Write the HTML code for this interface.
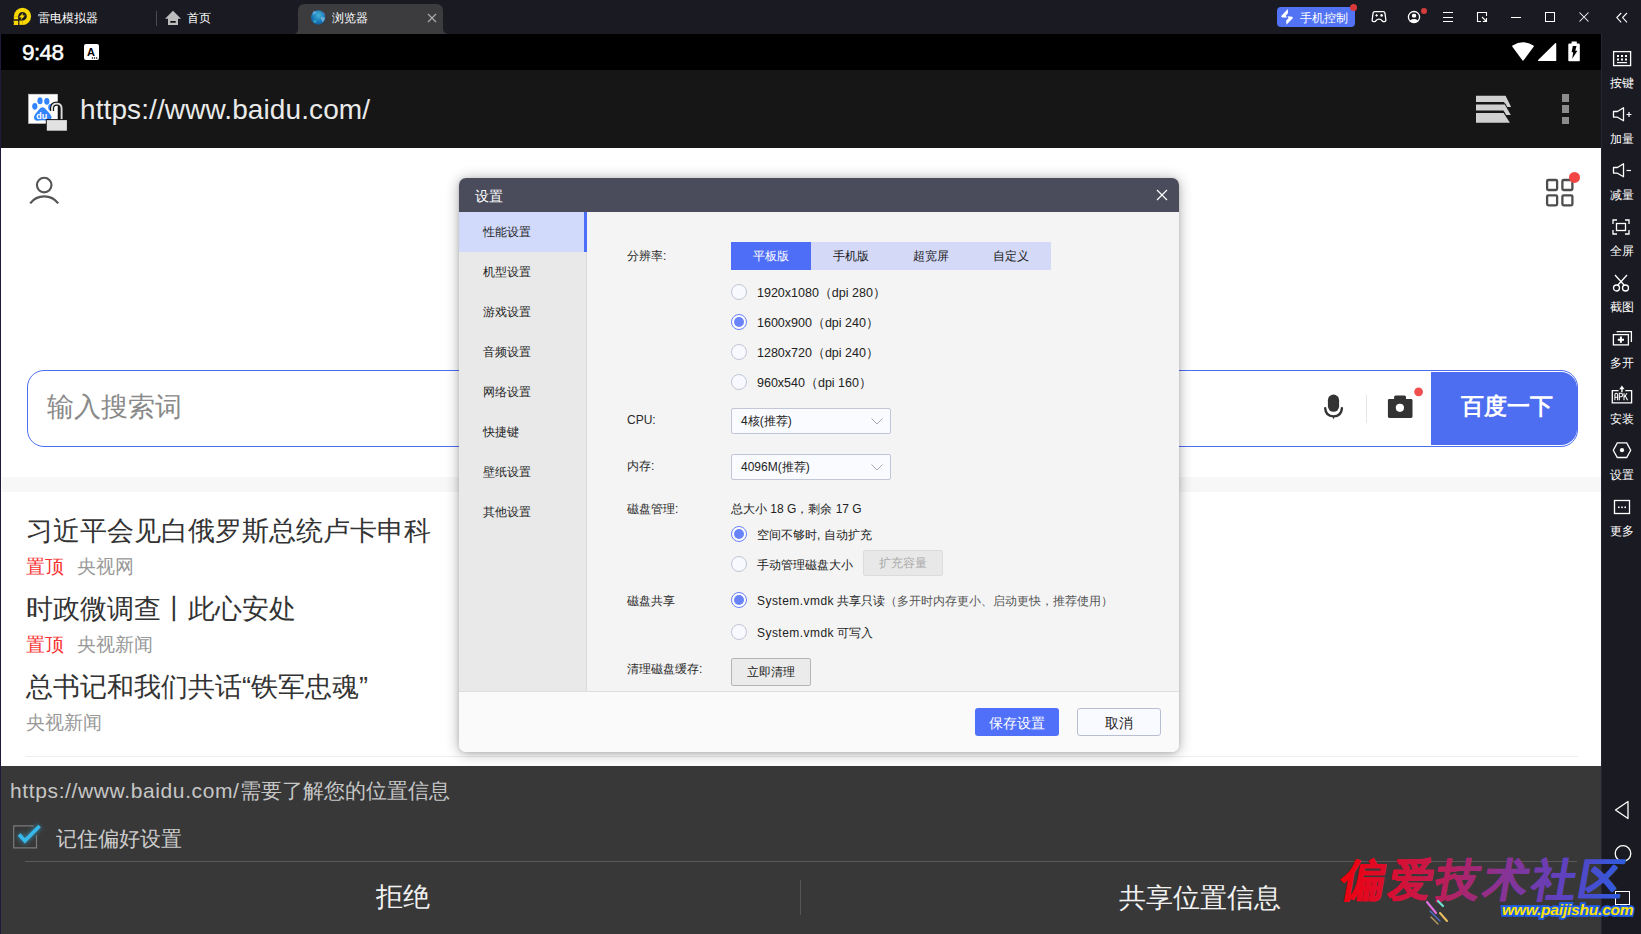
<!DOCTYPE html>
<html><head><meta charset="utf-8">
<style>
*{box-sizing:border-box;margin:0;padding:0}
html,body{width:1641px;height:934px;overflow:hidden}
body{position:relative;background:#1a1a22;font-family:"Liberation Sans",sans-serif;color:#fff}
.a{position:absolute}
.t{position:absolute;white-space:nowrap;line-height:1}
/* top bar */
#top{left:0;top:0;width:1641px;height:34px;background:#1a1a22}
/* android */
#status{left:1px;top:34px;width:1600px;height:36px;background:#000}
#addr{left:1px;top:70px;width:1600px;height:78px;background:#161616}
#page{left:1px;top:148px;width:1600px;height:618px;background:#fff;overflow:hidden}
#sheet{left:1px;top:766px;width:1600px;height:168px;background:#383838}
#side{left:1601px;top:34px;width:40px;height:900px;background:#1a1a22;border-left:1px solid #25243a}
.side-item{position:absolute;left:0;width:40px;text-align:center}
.side-lbl{position:absolute;left:0;width:40px;text-align:center;font-size:12px;color:#fff;line-height:12px}
/* dialog */
#dlg{left:459px;top:178px;width:720px;height:574px;background:#f4f4f4;border-radius:7px;box-shadow:0 1px 14px rgba(0,0,0,.32),0 1px 4px rgba(0,0,0,.12);overflow:hidden}
#dlg .title{left:0;top:0;width:720px;height:34px;background:#4a4c5b}
#nav{left:0;top:34px;width:128px;height:479px;background:#e9e9e9;border-right:1px solid #dadada}
.nav-it{position:absolute;left:0;width:127px;height:40px;font-size:12px;color:#1e1e1e;line-height:41px;padding-left:24px}
#foot{left:0;top:513px;width:720px;height:61px;background:#fafafa;border-top:1px solid #dedede}
.lbl{position:absolute;font-size:12px;color:#2a2a2a;line-height:14px;white-space:nowrap}
.radio{position:absolute;width:16px;height:16px;border-radius:50%;border:1.2px solid #c2c5d5;background:#f8f9ff}
.radio.on{border:1.2px solid #6580fb;background:#fff}
.radio.on::after{content:"";position:absolute;left:1.8px;top:1.8px;width:10px;height:10px;border-radius:50%;background:#6984fb}
.rtxt{position:absolute;font-size:12.5px;color:#222;line-height:14px;white-space:nowrap}
</style></head><body>

<div id="top" class="a">
  <!-- logo -->
  <svg class="a" style="left:8px;top:4px" width="28" height="26" viewBox="8 4 28 26">
    <path d="M16.05 16.3 A6.45 6.45 0 1 1 22.5 22.75" fill="none" stroke="#f8d800" stroke-width="4.3"/>
    <rect x="13.85" y="16.2" width="4.3" height="3.1" fill="#f8d800"/>
    <rect x="19.4" y="20.6" width="3.3" height="4.3" fill="#f8d800"/>
    <path d="M13.5 20.8 H18.2 V25 H13.3 L14 24 Z" fill="#f8d800"/>
    <path d="M23.4 12.4 L19 17.3 L21.6 17.5 L20.4 20.6 L25 15.5 L22.4 15.3 Z" fill="#f8d800"/>
  </svg>
  <div class="t" style="left:38px;top:12px;font-size:12px;color:#fff">雷电模拟器</div>
  <div class="a" style="left:156px;top:11px;width:1px;height:15px;background:#4a4a55"></div>
  <svg class="a" style="left:160px;top:6px" width="30" height="24" viewBox="160 6 30 24">
    <path d="M173 10.8 L181 18.8 H178 V25 H168 V18.8 H165 Z" fill="#bdbdbd"/>
    <rect x="170.2" y="21" width="5.6" height="1.8" rx="0.6" fill="#111"/>
  </svg>
  <div class="t" style="left:187px;top:12px;font-size:12px;color:#fff">首页</div>
  <!-- active tab -->
  <svg class="a" style="left:293px;top:4px" width="158" height="30" viewBox="0 0 158 30">
    <path d="M0.5 30 Q5 30 5 24 V7 Q5 0 12 0 H143 Q150 0 150 7 V24 Q150 30 156 30 Z" fill="#3c3c3f"/>
  </svg>
  <svg class="a" style="left:306px;top:6px" width="24" height="22" viewBox="306 6 24 22">
    <defs><radialGradient id="gl" cx="0.55" cy="0.35" r="0.7"><stop offset="0" stop-color="#45b4d6"/><stop offset="0.6" stop-color="#1a7ab8"/><stop offset="1" stop-color="#0f5a98"/></radialGradient></defs>
    <circle cx="318.1" cy="17.5" r="7.2" fill="url(#gl)"/>
    <path d="M313 11.5 Q315.5 10.8 317 12.5 Q315 14 312.5 15 Z" fill="#6bb0e0" opacity="0.8"/>
    <path d="M320.5 17.5 Q323.5 16.5 325 18 Q324.5 21 322.5 22 Q321.5 20 320.5 17.5Z" fill="#7ab8e0" opacity="0.8"/>
    <path d="M313.5 19.5 Q316 19.8 316.8 21.5 Q315.5 23.5 314.5 23 Q313.2 21.5 313.5 19.5Z" fill="#3ab0c8" opacity="0.8"/>
    <path d="M322.5 11.5 Q325 13 325.3 15.5 Q324 14 322.5 11.5Z" fill="#8a80f0" opacity="0.8"/>
  </svg>
  <div class="t" style="left:332px;top:12px;font-size:12px;color:#fff">浏览器</div>
  <svg class="a" style="left:427px;top:13px" width="10" height="10" viewBox="0 0 10 10"><path d="M1 1L9 9M9 1L1 9" stroke="#aaa" stroke-width="1.2"/></svg>

  <!-- right controls -->
  <div class="a" style="left:1277px;top:7px;width:78px;height:20px;border-radius:4px;background:#5274f4"></div>
  <svg class="a" style="left:1276px;top:4px" width="24" height="26" viewBox="1276 4 24 26"><path d="M1287.8 9 L1288 13.3 L1285.7 15.7 L1287.2 17.6 L1282.2 17.6 L1281 16.3 Z M1287.5 16.3 L1292.2 16.8 L1293 17.9 L1286.4 24.8 L1286.2 20.6 L1288.6 18.3 Z" fill="#fff"/></svg>
  <div class="t" style="left:1300px;top:12px;font-size:12px;color:#fff">手机控制</div>
  <div class="a" style="left:1350px;top:4px;width:7px;height:7px;border-radius:50%;background:#d9393b"></div>
  <svg class="a" style="left:1370px;top:9px" width="18" height="15" viewBox="1370 9 18 15"><path d="M1374.6 11.6 H1383.4 Q1384.6 11.6 1384.9 12.8 L1385.8 19.5 Q1386 21.6 1384.4 21.6 H1383.4 Q1382.6 21.6 1382 20.6 Q1381 19.2 1379 19.2 Q1377 19.2 1376 20.6 Q1375.4 21.6 1374.6 21.6 H1373.6 Q1372 21.6 1372.2 19.5 L1373.1 12.8 Q1373.4 11.6 1374.6 11.6 Z" fill="none" stroke="#fff" stroke-width="1.3" stroke-linejoin="round"/><path d="M1375.3 15.4 H1377.9 M1376.6 14.1 V16.7" stroke="#fff" stroke-width="1"/><circle cx="1381.6" cy="15.4" r="1.3" fill="#fff"/></svg>
  <svg class="a" style="left:1406px;top:9px" width="16" height="16" viewBox="1406 9 16 16"><defs><clipPath id="uc"><circle cx="1414" cy="17.1" r="5.5"/></clipPath></defs><circle cx="1414" cy="17.1" r="5.6" fill="none" stroke="#fff" stroke-width="1.3"/><rect x="1411.9" y="13.7" width="4.3" height="3.9" rx="1.6" fill="#fff"/><g clip-path="url(#uc)"><ellipse cx="1414" cy="22.6" rx="4.4" ry="3.6" fill="#fff"/></g></svg>
  <div class="a" style="left:1421px;top:8px;width:6px;height:6px;border-radius:50%;background:#d63c3c"></div>
  <div class="a" style="left:1443px;top:12px;width:10px;height:1.3px;background:#fff"></div>
  <div class="a" style="left:1443px;top:16.5px;width:10px;height:1.3px;background:#fff"></div>
  <div class="a" style="left:1443px;top:21px;width:10px;height:1.3px;background:#fff"></div>
  <svg class="a" style="left:1470px;top:6px" width="30" height="22" viewBox="1470 6 30 22"><path d="M1486.5 16 V12.5 H1477.5 V21.5 H1481" fill="none" stroke="#fff" stroke-width="1.1"/><path d="M1482.8 21.5 H1486.5 V18" fill="none" stroke="#fff" stroke-width="1.1"/><path d="M1482 17 L1485.6 20.6" stroke="#fff" stroke-width="1.1"/><path d="M1487 18.3 V22 H1483.3 Z" fill="#fff"/></svg>
  <div class="a" style="left:1511px;top:17px;width:10px;height:1.3px;background:#fff"></div>
  <div class="a" style="left:1545px;top:12px;width:10px;height:10px;border:1.3px solid #fff"></div>
  <svg class="a" style="left:1579px;top:12px" width="10" height="10" viewBox="0 0 10 10"><path d="M0.5 0.5L9.5 9.5M9.5 0.5L0.5 9.5" stroke="#fff" stroke-width="1.05"/></svg>
  <svg class="a" style="left:1615px;top:12px" width="13" height="11" viewBox="0 0 13 11"><path d="M6.2 1 L1.8 5.6 L6.2 10.3 M12 1 L7.6 5.6 L12 10.3" fill="none" stroke="#fff" stroke-width="1.1"/></svg>
</div>

<div class="a" style="left:0;top:34px;width:1px;height:900px;background:#1d1b3a"></div>
<!-- status bar -->
<div id="status" class="a">
  <div class="t" style="left:21px;top:8px;font-size:22.5px;color:#fff;-webkit-text-stroke:0.5px #fff;letter-spacing:-0.6px">9:48</div>
  <div class="a" style="left:83px;top:10px;width:15px;height:16px;background:#fff;border-radius:2px"></div>
  <div class="t" style="left:86px;top:13px;font-size:11px;font-weight:bold;color:#000">A</div><svg class="a" style="left:90px;top:23px" width="8" height="2" viewBox="0 0 8 2"><circle cx="1.4" cy="1" r="0.75" fill="#000"/><circle cx="3.5" cy="1" r="0.75" fill="#000"/><circle cx="5.6" cy="1" r="0.75" fill="#000"/></svg>
  <svg class="a" style="left:1510px;top:7px" width="72" height="22" viewBox="0 0 72 22">
    <path d="M2 5.2 Q12 -1.2 22 5.2 L12 18.8 Z" fill="#fff" stroke="#fff" stroke-width="1.6" stroke-linejoin="round"/>
    <path d="M27.6 19.4 L44.6 2.6 V19.4 Z" fill="#fff" stroke="#fff" stroke-width="1.3" stroke-linejoin="round"/>
    <path d="M57.3 3.6 Q57.3 2.4 58.5 2.4 H60.6 V0.4 H65.8 V2.4 H67.6 Q68.8 2.4 68.8 3.6 V19.4 Q68.8 20.2 68 20.2 H58.1 Q57.3 20.2 57.3 19.4 Z" fill="#fff"/>
    <path d="M61.8 5 H65.5 L64.3 9.8 H66.4 L61.2 17.8 L62.2 11.3 H60.6 Z" fill="#000"/>
  </svg>
</div>

<!-- address bar -->
<div id="addr" class="a">
  <svg class="a" style="left:23px;top:20px" width="50" height="44" viewBox="24 90 50 44">
    <rect x="28.6" y="94.2" width="29" height="29.2" fill="#fff" stroke="#cfcfcf" stroke-width="0.6"/>
    <ellipse cx="34.8" cy="106.3" rx="2.6" ry="3.4" fill="#3385ff"/>
    <ellipse cx="40" cy="100.7" rx="2.6" ry="3.5" fill="#3385ff"/>
    <ellipse cx="46.8" cy="101.3" rx="2.6" ry="3.4" fill="#3385ff"/>
    <ellipse cx="50.6" cy="107.3" rx="2.4" ry="3.2" fill="#3385ff"/>
    <path d="M42.7 107.2 Q40.5 107 38.5 110 L35 114.5 Q33 117 34.5 119.5 Q36 121.2 39 120.6 Q42.7 120 46 120.6 Q49.5 121.2 51 119 Q52.3 116.5 50 114 L46.5 110 Q44.7 107.2 42.7 107.2 Z" fill="#3385ff"/>
    <text x="36.3" y="118.6" font-size="9" font-weight="bold" fill="#fff" font-family="Liberation Sans">du</text>
    <path d="M52 111 V108.5 Q52 103.6 56.8 103.6 Q61.6 103.6 61.6 108.5 V121" fill="none" stroke="#161616" stroke-width="4.2"/>
    <path d="M52 111 V108.5 Q52 103.6 56.8 103.6 Q61.6 103.6 61.6 108.5 V121" fill="none" stroke="#dcdcdc" stroke-width="1.9"/>
    <rect x="45.8" y="119.1" width="22.2" height="12.6" fill="#161616"/>
    <rect x="46.8" y="120.1" width="20.1" height="10.6" fill="#e2e2e2"/>
  </svg>
  <div class="t" style="left:79px;top:26px;font-size:28px;color:#eaeaea;letter-spacing:0.1px">https://www.baidu.com/</div>
  <svg class="a" style="left:1469px;top:20px" width="46" height="38" viewBox="1470 90 46 38">
    <path d="M1476 95.8 H1505.6 L1511.1 107 H1506.5 L1504 102 H1476 Z" fill="#d0d0d0"/>
    <path d="M1476 103.6 H1505.4 L1511.9 115.9 H1505.4 L1502.9 111.5 H1476 Z" fill="#161616"/>
    <path d="M1476 104.6 H1504.8 L1510.8 114.9 H1506 L1503.5 110.5 H1476 Z" fill="#d0d0d0"/>
    <path d="M1476 111.9 H1504.2 L1510.8 123.8 H1476 Z" fill="#161616"/>
    <path d="M1476 112.9 H1503.6 L1509.9 122.8 H1476 Z" fill="#d0d0d0"/>
  </svg>
  <div class="a" style="left:1560.5px;top:24px;width:7.5px;height:7.5px;background:#8c8c8c"></div>
  <div class="a" style="left:1560.5px;top:35.2px;width:7.5px;height:7.5px;background:#8c8c8c"></div>
  <div class="a" style="left:1560.5px;top:46.5px;width:7.5px;height:7.5px;background:#8c8c8c"></div>
</div>

<!-- page -->
<div id="page" class="a">
  <svg class="a" style="left:25px;top:23px" width="40" height="40" viewBox="26 171 40 40">
    <circle cx="44.2" cy="185.1" r="7.3" fill="none" stroke="#555" stroke-width="2.1"/>
    <path d="M30.2 203.4 A17.5 17.5 0 0 1 58.2 203.4" fill="none" stroke="#555" stroke-width="2.2"/>
  </svg>
  <svg class="a" style="left:1541px;top:20px" width="44" height="44" viewBox="1542 168 44 44">
    <rect x="1547.1" y="180" width="10" height="10" rx="1.2" fill="none" stroke="#4d4d4d" stroke-width="2.3"/>
    <rect x="1562.4" y="180" width="10" height="10" rx="1.2" fill="none" stroke="#4d4d4d" stroke-width="2.3"/>
    <rect x="1547.1" y="195.3" width="10" height="10" rx="1.2" fill="none" stroke="#4d4d4d" stroke-width="2.3"/>
    <rect x="1562.4" y="195.3" width="10" height="10" rx="1.2" fill="none" stroke="#4d4d4d" stroke-width="2.3"/>
    <circle cx="1574.5" cy="177.4" r="5.5" fill="#f24545"/>
  </svg>
  <div class="a" style="left:26px;top:222px;width:1551px;height:77px;border:1px solid #4e6ef2;border-radius:17px;background:#fff"></div>
  <div class="a" style="left:1430px;top:224px;width:146px;height:73px;background:#4e6ef2;border-radius:0 16px 16px 0"></div>
  <div class="t" style="left:46px;top:246px;font-size:27px;color:#8a8a8a">输入搜索词</div>
  <svg class="a" style="left:1319px;top:242px" width="30" height="32" viewBox="1320 390 30 32">
    <rect x="1327.9" y="394.6" width="11.2" height="17.2" rx="5.6" fill="#333"/>
    <path d="M1325.2 408.3 Q1325.6 416.2 1333.5 416.4 Q1341.4 416.2 1341.9 408.3" fill="none" stroke="#333" stroke-width="2.4" stroke-linecap="round"/>
    <path d="M1332.2 416 H1334.8 L1333.5 419.6 Z" fill="#333"/>
  </svg>
  <div class="a" style="left:1365px;top:247px;width:1px;height:28px;background:#e6e6e6"></div>
  <svg class="a" style="left:1384px;top:238px" width="42" height="34" viewBox="1385 386 42 34">
    <path d="M1389.3 399 H1394.1 V397 Q1394.1 395.5 1395.6 395.5 H1404.5 Q1406 395.5 1406 397 V399 H1411.1 Q1412.5 399 1412.5 400.4 V416.5 Q1412.5 417.9 1411.1 417.9 H1389.3 Q1387.9 417.9 1387.9 416.5 V400.4 Q1387.9 399 1389.3 399 Z" fill="#333"/>
    <circle cx="1399.9" cy="407.8" r="4.1" fill="#fff"/>
    <circle cx="1418.6" cy="391.8" r="4.4" fill="#f24f4f"/>
  </svg>
  <div class="t" style="left:1460px;top:247px;font-size:23px;font-weight:bold;color:#fff">百度一下</div>
  <div class="a" style="left:1px;top:329px;width:1599px;height:15px;background:#f7f7f7"></div>
  <div class="t" style="left:25px;top:370px;font-size:27px;color:#333">习近平会见白俄罗斯总统卢卡申科</div>
  <div class="t" style="left:25px;top:409px;font-size:19px;color:#f73131">置顶</div>
  <div class="t" style="left:76px;top:409px;font-size:19px;color:#999">央视网</div>
  <div class="t" style="left:25px;top:448px;font-size:27px;color:#333">时政微调查丨此心安处</div>
  <div class="t" style="left:25px;top:487px;font-size:19px;color:#f73131">置顶</div>
  <div class="t" style="left:76px;top:487px;font-size:19px;color:#999">央视新闻</div>
  <div class="t" style="left:25px;top:526px;font-size:27px;color:#333">总书记和我们共话“铁军忠魂”</div>
  <div class="t" style="left:25px;top:565px;font-size:19px;color:#999">央视新闻</div>
  <div class="a" style="left:25px;top:608px;width:1552px;height:1px;background:#eee"></div>
</div>

<!-- bottom sheet -->
<div id="sheet" class="a">
  <div class="t" style="left:9px;top:14px;font-size:21px;color:#c6c6c6"><span style="letter-spacing:0.62px">https://www.baidu.com/</span>需要了解您的位置信息</div>
  <svg class="a" style="left:6px;top:50px" width="40" height="40" viewBox="0 0 40 40">
    <defs><filter id="glow" x="-50%" y="-50%" width="200%" height="200%"><feGaussianBlur stdDeviation="2.2"/></filter></defs>
    <path d="M26.6 9.9 H6.7 V31.9 H29.5 V19.2" fill="none" stroke="#7a7a7a" stroke-width="1.2"/>
    <path d="M12 18.4 L17.9 24.8 L32.6 10" fill="none" stroke="#33b5e5" stroke-width="6" opacity="0.45" filter="url(#glow)"/>
    <path d="M12 18.4 L17.9 24.8 L32.6 10" fill="none" stroke="#38b8ea" stroke-width="3.7" stroke-linejoin="miter"/>
  </svg>
  <div class="t" style="left:55px;top:62px;font-size:21px;color:#cbcbcb">记住偏好设置</div>
  <div class="a" style="left:24px;top:95px;width:1552px;height:1px;background:#5a5a5a"></div>
  <div class="a" style="left:799px;top:114px;width:1px;height:35px;background:#555"></div>
  <div class="t" style="left:375px;top:118px;font-size:27px;color:#f2f2f2">拒绝</div>
  <div class="t" style="left:1118px;top:119px;font-size:26.6px;color:#f2f2f2">共享位置信息</div>
</div>

<!-- sidebar -->
<div id="side" class="a">
  <svg class="a" style="left:10px;top:16px" width="20" height="17" viewBox="0 0 20 17"><rect x="1.6" y="1.6" width="17" height="14" stroke="#fff" stroke-width="1.3" fill="none"/><rect x="5" y="5" width="2" height="2" fill="#fff"/><rect x="9" y="5" width="2" height="2" fill="#fff"/><rect x="13" y="5" width="2" height="2" fill="#fff"/><rect x="5" y="8.5" width="2" height="2" fill="#fff"/><rect x="9" y="8.5" width="2" height="2" fill="#fff"/><rect x="13" y="8.5" width="2" height="2" fill="#fff"/><rect x="5" y="12" width="10" height="1.2" fill="#fff"/></svg>
  <div class="side-lbl" style="top:43px">按键</div>
  <svg class="a" style="left:10px;top:73px" width="21" height="15" viewBox="0 0 21 15"><path d="M1.5 4.5 H5.5 L11.5 0.8 V13.8 L5.5 10.2 H1.5 Z" stroke="#fff" stroke-width="1.3" fill="none" stroke-linejoin="round"/><path d="M14.5 7.5 H19.5 M17 5 V10" stroke="#fff" stroke-width="1.2"/></svg>
  <div class="side-lbl" style="top:99px">加量</div>
  <svg class="a" style="left:10px;top:129px" width="21" height="15" viewBox="0 0 21 15"><path d="M1.5 4.5 H5.5 L11.5 0.8 V13.8 L5.5 10.2 H1.5 Z" stroke="#fff" stroke-width="1.3" fill="none" stroke-linejoin="round"/><path d="M14.5 7.5 H19" stroke="#fff" stroke-width="1.2"/></svg>
  <div class="side-lbl" style="top:155px">减量</div>
  <svg class="a" style="left:10px;top:185px" width="18" height="16" viewBox="0 0 18 16"><path d="M1 5 V1 H5 M13 1 H17 V5 M17 11 V15 H13 M5 15 H1 V11" stroke="#fff" stroke-width="1.3" fill="none"/><rect x="4.5" y="4.5" width="9" height="7" stroke="#fff" stroke-width="1.3" fill="none"/></svg>
  <div class="side-lbl" style="top:211px">全屏</div>
  <svg class="a" style="left:10px;top:240px" width="18" height="18" viewBox="0 0 18 18"><path d="M3 1 L12.5 11.5 M15 1 L5.5 11.5" stroke="#fff" stroke-width="1.3" fill="none"/><circle cx="4.5" cy="14" r="3" stroke="#fff" stroke-width="1.3" fill="none"/><circle cx="13.5" cy="14" r="3" stroke="#fff" stroke-width="1.3" fill="none"/></svg>
  <div class="side-lbl" style="top:267px">截图</div>
  <svg class="a" style="left:8px;top:294px" width="26" height="22" viewBox="1610 328 26 22"><rect x="1613.4" y="334.6" width="15" height="10.3" stroke="#fff" stroke-width="1.3" fill="none"/><path d="M1616.6 331.6 H1631.4 V342" stroke="#fff" stroke-width="1.3" fill="none"/><path d="M1620.9 336.6 V342.8 M1617.8 339.7 H1624" stroke="#fff" stroke-width="2"/></svg>
  <div class="side-lbl" style="top:323px">多开</div>
  <svg class="a" style="left:8px;top:349px" width="28" height="22" viewBox="1610 383 28 22"><path d="M1618.5 390.6 H1612.3 V402.9 H1631.6 V390.6 H1625.3" stroke="#fff" stroke-width="1.3" fill="none"/><path d="M1621.9 392.2 V387.5" stroke="#fff" stroke-width="1.4"/><path d="M1619.3 389.3 L1621.9 385.6 L1624.5 389.3 Z" fill="#fff"/><path d="M1614.9 400.3 V394.7 Q1614.9 393.3 1616.3 393.3 Q1617.6 393.3 1617.6 394.7 V400.3 M1614.9 397.2 H1617.6 M1619.3 400.3 V393.3 H1621.2 Q1622.5 393.3 1622.5 395 Q1622.5 396.7 1621.2 396.7 H1619.3 M1624 393.3 V400.3 M1624 397.2 L1627 393.3 M1625.2 395.8 L1627.6 400.3" fill="none" stroke="#fff" stroke-width="1.05"/></svg>
  <div class="side-lbl" style="top:379px">安装</div>
  <svg class="a" style="left:8px;top:406px" width="26" height="20" viewBox="1610 440 26 20"><path d="M1617.3 442.9 H1626.7 L1630.7 450.2 L1626.7 457.5 H1617.3 L1613.3 450.2 Z" stroke="#fff" stroke-width="1.3" fill="none"/><circle cx="1622" cy="450.2" r="2.1" fill="#fff"/></svg>
  <div class="side-lbl" style="top:435px">设置</div>
  <svg class="a" style="left:11px;top:465px" width="18" height="16" viewBox="0 0 18 16"><rect x="1.5" y="1.5" width="15" height="13" stroke="#fff" stroke-width="1.3" fill="none"/><rect x="5" y="7.5" width="1.6" height="1.6" fill="#fff"/><rect x="8.2" y="7.5" width="1.6" height="1.6" fill="#fff"/><rect x="11.4" y="7.5" width="1.6" height="1.6" fill="#fff"/></svg>
  <div class="side-lbl" style="top:491px">更多</div>
  <svg class="a" style="left:12px;top:766px" width="16" height="20" viewBox="0 0 16 20"><path d="M14 1.5 V18.5 L1.5 10 Z" stroke="#fff" stroke-width="1.3" fill="none" stroke-linejoin="round"/></svg>
  <svg class="a" style="left:11px;top:810px" width="20" height="20" viewBox="0 0 20 20"><circle cx="10" cy="9.5" r="7.8" stroke="#fff" stroke-width="1.3" fill="none"/></svg>
  <div class="a" style="left:13px;top:857px;width:15px;height:14px;border:1.3px solid #fff"></div>
</div>

<!-- dialog -->
<div id="dlg" class="a">
  <div class="a title"></div>
  <div class="t" style="left:16px;top:10.5px;font-size:14px;color:#fff">设置</div>
  <svg class="a" style="left:697px;top:11px" width="12" height="12" viewBox="0 0 12 12"><path d="M1 1L11 11M11 1L1 11" stroke="#fff" stroke-width="1.2"/></svg>
  <div id="nav" class="a">
    <div class="a" style="left:0;top:0;width:128px;height:40px;background:#d2dafc"></div>
    <div class="a" style="left:125px;top:0;width:3px;height:40px;background:#4f6ef8"></div>
    <div class="nav-it" style="top:0px">性能设置</div><div class="nav-it" style="top:40px">机型设置</div><div class="nav-it" style="top:80px">游戏设置</div><div class="nav-it" style="top:120px">音频设置</div><div class="nav-it" style="top:160px">网络设置</div><div class="nav-it" style="top:200px">快捷键</div><div class="nav-it" style="top:240px">壁纸设置</div><div class="nav-it" style="top:280px">其他设置</div>
  </div>
  <div class="lbl" style="left:168px;top:71px">分辨率:</div><div class="a" style="left:272px;top:64px;width:320px;height:28px;background:#d3d9f7"></div><div class="a" style="left:272px;top:64px;width:80px;height:28px;background:#4f6ef8"></div><div class="lbl" style="left:272px;top:71px;width:80px;text-align:center;color:#fff">平板版</div><div class="lbl" style="left:352px;top:71px;width:80px;text-align:center;color:#222">手机版</div><div class="lbl" style="left:432px;top:71px;width:80px;text-align:center;color:#222">超宽屏</div><div class="lbl" style="left:512px;top:71px;width:80px;text-align:center;color:#222">自定义</div><div class="radio" style="left:272px;top:106px"></div><div class="rtxt" style="left:298px;top:107px;margin-top:1px">1920x1080（dpi 280）</div><div class="radio on" style="left:272px;top:136px"></div><div class="rtxt" style="left:298px;top:137px;margin-top:1px">1600x900（dpi 240）</div><div class="radio" style="left:272px;top:166px"></div><div class="rtxt" style="left:298px;top:167px;margin-top:1px">1280x720（dpi 240）</div><div class="radio" style="left:272px;top:196px"></div><div class="rtxt" style="left:298px;top:197px;margin-top:1px">960x540（dpi 160）</div><div class="lbl" style="left:168px;top:235px">CPU:</div><div class="a" style="left:272px;top:230px;width:160px;height:26px;background:#fafbff;border:1px solid #c3c6d8;border-radius:2px"><div class="lbl" style="left:9px;top:5px;color:#222">4核(推荐)</div><svg class="a" style="right:7px;top:9px" width="12" height="7" viewBox="0 0 12 7"><path d="M0.5 0.5 L6 6 L11.5 0.5" fill="none" stroke="#a6a9ba" stroke-width="1"/></svg></div><div class="lbl" style="left:168px;top:281px">内存:</div><div class="a" style="left:272px;top:276px;width:160px;height:26px;background:#fafbff;border:1px solid #c3c6d8;border-radius:2px"><div class="lbl" style="left:9px;top:5px;color:#222">4096M(推荐)</div><svg class="a" style="right:7px;top:9px" width="12" height="7" viewBox="0 0 12 7"><path d="M0.5 0.5 L6 6 L11.5 0.5" fill="none" stroke="#a6a9ba" stroke-width="1"/></svg></div><div class="lbl" style="left:168px;top:324px">磁盘管理:</div><div class="lbl" style="left:272px;top:324px;color:#222">总大小 18 G，剩余 17 G</div><div class="radio on" style="left:272px;top:348px"></div><div class="lbl" style="left:298px;top:350px;color:#222">空间不够时, 自动扩充</div><div class="radio" style="left:272px;top:378px"></div><div class="lbl" style="left:298px;top:380px;color:#222">手动管理磁盘大小</div><div class="a" style="left:404px;top:372px;width:80px;height:26px;background:#e8e8e8;border:1px solid #dcdcdc;border-radius:2px"><div class="lbl" style="left:0;top:5px;width:78px;text-align:center;color:#aaa">扩充容量</div></div><div class="lbl" style="left:168px;top:416px">磁盘共享</div><div class="radio on" style="left:272px;top:414px"></div><div class="lbl" style="left:298px;top:416px;color:#222"><span style="letter-spacing:0.45px">System.vmdk</span> 共享只读<span style="color:#555">（多开时内存更小、启动更快，推荐使用）</span></div><div class="radio" style="left:272px;top:446px"></div><div class="lbl" style="left:298px;top:448px;color:#222"><span style="letter-spacing:0.45px">System.vmdk</span> 可写入</div><div class="lbl" style="left:168px;top:484px">清理磁盘缓存:</div><div class="a" style="left:272px;top:480px;width:80px;height:28px;background:#ebebeb;border:1px solid #b5b5b5;border-radius:2px"><div class="lbl" style="left:0;top:6px;width:78px;text-align:center;color:#222">立即清理</div></div>
  <div id="foot" class="a">
    <div class="a" style="left:516px;top:16px;width:84px;height:28px;background:#5170fa;border-radius:3px"></div>
    <div class="t" style="left:516px;top:24px;width:84px;text-align:center;font-size:14px;color:#fff">保存设置</div>
    <div class="a" style="left:618px;top:16px;width:84px;height:28px;background:#f9faff;border:1px solid #b9bdd2;border-radius:3px"></div>
    <div class="t" style="left:618px;top:24px;width:84px;text-align:center;font-size:14px;color:#222">取消</div>
  </div>
</div>


<!-- watermark -->
<svg class="a" style="left:1330px;top:845px" width="311" height="65" viewBox="0 0 311 65">
  <defs><linearGradient id="wg" x1="0" y1="0" x2="1" y2="0">
    <stop offset="0" stop-color="#f0000c"/><stop offset="0.3" stop-color="#c81848"/><stop offset="0.55" stop-color="#8c3290"/><stop offset="0.78" stop-color="#5e42c0"/><stop offset="1" stop-color="#2a5ee2"/>
  </linearGradient></defs>
  <g transform="skewX(-10)" transform-origin="0 55">
  <text x="8" y="50" font-size="44" font-weight="900" fill="url(#wg)" stroke="url(#wg)" stroke-width="1.2" stroke-linejoin="round" letter-spacing="4" font-family="Liberation Sans, sans-serif">偏爱技术社区</text>
  </g>
</svg>
<svg class="a" style="left:1424px;top:899px" width="30" height="28" viewBox="0 0 30 28">
  <path d="M3 3 L12 14" stroke="#e070e0" stroke-width="2.2" stroke-linecap="round"/>
  <path d="M14 2 L19 7" stroke="#70e0d0" stroke-width="2.2" stroke-linecap="round"/>
  <path d="M6 12 L16 22" stroke="#5070d0" stroke-width="1.2" stroke-linecap="round"/>
  <path d="M16 14 L23 22" stroke="#e8c060" stroke-width="2" stroke-linecap="round"/>
  <path d="M7 18 L14 25" stroke="#c0a060" stroke-width="1.2" stroke-linecap="round"/>
</svg>
<div class="t" style="left:1502px;top:902px;font-size:15.5px;font-weight:bold;font-style:italic;color:#ffe400;-webkit-text-stroke:3.6px #1f5fe8;paint-order:stroke fill;letter-spacing:-0.2px">www.paijishu.com</div>
</body></html>
